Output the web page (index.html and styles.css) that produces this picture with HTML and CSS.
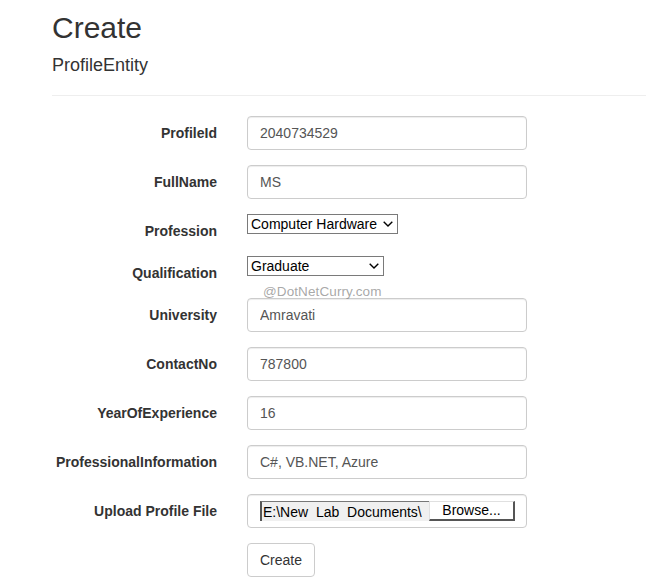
FILE: index.html
```html
<!DOCTYPE html>
<html>
<head>
<meta charset="utf-8">
<title>Create</title>
<link rel="stylesheet" href="styles.css">
</head>
<body>
<div class="page">
  <h2 class="title">Create</h2>
  <h4 class="subtitle">ProfileEntity</h4>
  <hr class="rule">
  <form class="form">
    <div class="group">
      <label class="label">ProfileId</label>
      <div class="field"><input class="control" type="text" value="2040734529"></div>
    </div>
    <div class="group">
      <label class="label">FullName</label>
      <div class="field"><input class="control" type="text" value="MS"></div>
    </div>
    <div class="group">
      <label class="label">Profession</label>
      <div class="field">
        <div class="select sel-prof"><span>Computer Hardware</span><svg class="chev" viewBox="0 0 10 6" width="10" height="6"><path d="M0.7 0.7 L5 5 L9.3 0.7" fill="none" stroke="#000" stroke-width="1.4"/></svg></div>
      </div>
    </div>
    <div class="group">
      <label class="label">Qualification</label>
      <div class="field">
        <div class="select sel-qual"><span>Graduate</span><svg class="chev" viewBox="0 0 10 6" width="10" height="6"><path d="M0.7 0.7 L5 5 L9.3 0.7" fill="none" stroke="#000" stroke-width="1.4"/></svg></div>
      </div>
    </div>
    <div class="group">
      <label class="label">University</label>
      <div class="field"><input class="control" type="text" value="Amravati"></div>
    </div>
    <div class="group">
      <label class="label">ContactNo</label>
      <div class="field"><input class="control" type="text" value="787800"></div>
    </div>
    <div class="group">
      <label class="label">YearOfExperience</label>
      <div class="field"><input class="control" type="text" value="16"></div>
    </div>
    <div class="group">
      <label class="label">ProfessionalInformation</label>
      <div class="field"><input class="control" type="text" value="C#, VB.NET, Azure"></div>
    </div>
    <div class="group">
      <label class="label">Upload Profile File</label>
      <div class="field">
        <div class="control filebox">
          <span class="filepath">E:\New&nbsp; Lab&nbsp; Documents\</span><span class="browse">Browse...</span>
        </div>
      </div>
    </div>
    <div class="group">
      <div class="label-spacer"></div>
      <div class="field"><button class="btn" type="button">Create</button></div>
    </div>
  </form>
  <div class="watermark">@DotNetCurry.com</div>
</div>
</body>
</html>
```
FILE: styles.css
```css
* { box-sizing: border-box; }
html, body { margin: 0; padding: 0; background: #fff; }
body {
  font-family: "Liberation Sans", Arial, sans-serif;
  font-size: 14px;
  line-height: 20px;
  color: #333;
}
.page {
  position: relative;
  padding: 11px 0 0 52px;
}
.title {
  margin: 0;
  font-size: 30px;
  font-weight: 500;
  line-height: 33px;
  color: #333;
}
.subtitle {
  margin: 11px 0 0 0;
  font-size: 18px;
  font-weight: 500;
  line-height: 20px;
}
.rule {
  margin: 20px 0 20px 0;
  border: 0;
  border-top: 1px solid #eee;
  height: 0;
}
.form { display: flex; flex-direction: column; gap: 15px; }
.group { display: flex; align-items: flex-start; }
.label, .label-spacer {
  width: 165px;
  flex: none;
  text-align: right;
  font-weight: bold;
  padding-top: 7px;
  line-height: 20px;
}
.label-spacer { padding: 0; }
.field { margin-left: 30px; }
.control {
  display: block;
  width: 280px;
  height: 34px;
  padding: 6px 12px;
  font-family: "Liberation Sans", Arial, sans-serif;
  font-size: 14px;
  line-height: 20px;
  color: #555;
  background: #fff;
  border: 1px solid #ccc;
  border-radius: 4px;
  box-shadow: inset 0 1px 1px rgba(0,0,0,0.075);
  outline: none;
}
.select {
  display: flex;
  align-items: center;
  justify-content: space-between;
  height: 20px;
  border: 1px solid #7a7a7a;
  background: #fff;
  color: #000;
  font-size: 14px;
  line-height: 18px;
  padding: 0 4px 0 3px;
}
.sel-prof { width: 151px; }
.sel-qual { width: 137px; }
.chev { flex: none; }
.filebox {
  display: flex;
  align-items: center;
  padding: 7px 12px;
}
.filepath {
  width: 169px;
  flex: none;
  height: 20px;
  overflow: hidden;
  white-space: nowrap;
  background: #f0f0f0;
  border-left: 2px solid #555;
  border-top: 1px solid #777;
  color: #000;
  font-size: 14px;
  line-height: 20px;
  padding-left: 1px;
}
.browse {
  width: 86px;
  height: 20px;
  flex: none;
  background: #fff;
  border-top: 1px solid #e0e0e0;
  border-left: 1px solid #e0e0e0;
  border-right: 2px solid #555;
  border-bottom: 2px solid #555;
  color: #000;
  text-align: center;
  font-size: 14px;
  line-height: 17px;
}
.btn {
  display: block;
  width: 68px;
  height: 34px;
  padding: 6px 12px;
  font-family: "Liberation Sans", Arial, sans-serif;
  font-size: 14px;
  line-height: 20px;
  color: #333;
  background: #fff;
  border: 1px solid #ccc;
  border-radius: 4px;
}
.watermark {
  position: absolute;
  left: 263px;
  top: 284px;
  font-size: 13.5px;
  line-height: 16px;
  color: rgba(130,130,130,0.7);
  letter-spacing: 0.1px;
}
```
